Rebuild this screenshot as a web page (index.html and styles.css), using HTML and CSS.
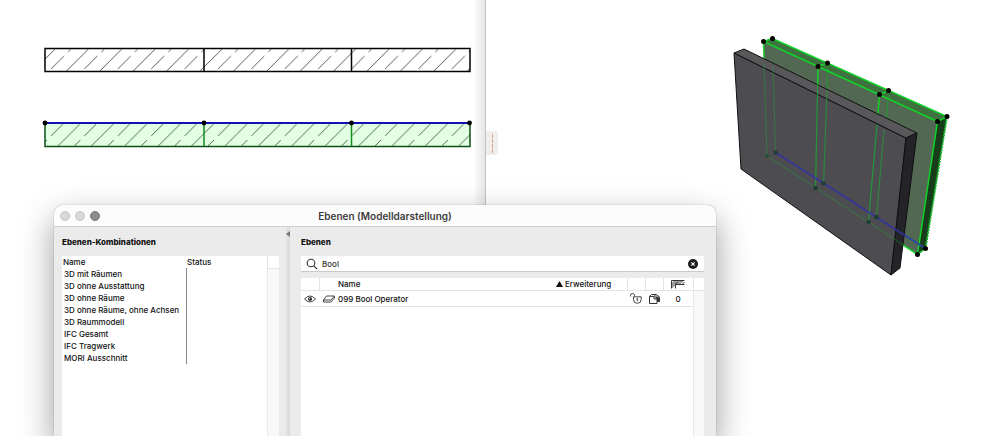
FILE: index.html
```html
<!DOCTYPE html>
<html lang="de">
<head>
    <meta charset="UTF-8">
    <meta name="viewport" content="width=device-width, initial-scale=1.0">
    <title>Ebenen (Modelldarstellung)</title>
    <link rel="stylesheet" href="styles.css">
</head>
<body>
    <main class="workspace">
        <section class="plan-view">
            <svg width="485" height="160" viewBox="0 0 485 160">
                <defs>
                    <pattern id="hatch" patternUnits="userSpaceOnUse" x="44" y="48" width="33.4" height="24">
                        <path d="M-11.4 23.5L11.1 1M22 23.5L44.5 1M7 21L20 8M24 4L27 1" stroke="#333" stroke-width="0.8" fill="none"/>
                    </pattern>
                    <pattern id="hatch-green" patternUnits="userSpaceOnUse" x="44" y="123" width="33.4" height="24">
                        <path d="M13.5 23.5L36 1M-19.9 23.5L2.6 1M7 13L19 1M-3 23L3 17M30.4 23L36.4 17" stroke="#264a26" stroke-width="0.8" fill="none"/>
                    </pattern>
                </defs>
                <rect x="45" y="48.5" width="425" height="23" fill="url(#hatch)" stroke="#000" stroke-width="1.5"/>
                <path d="M204 48V72M351.5 48V72" stroke="#000" stroke-width="1.5"/>
                <rect x="45" y="123" width="425" height="23.5" fill="#e3ffe3"/>
                <rect x="45" y="123" width="425" height="23.5" fill="url(#hatch-green)" stroke="#0b4f14" stroke-width="1.5"/>
                <path d="M204 123V146M351.5 123V146" stroke="#158a20" stroke-width="1.5"/>
                <path d="M45 123H470" stroke="#1212b4" stroke-width="2"/>
                <g fill="#000">
                    <circle cx="45" cy="123" r="2.4"/>
                    <circle cx="204" cy="123" r="2.4"/>
                    <circle cx="351.5" cy="123" r="2.4"/>
                    <circle cx="469.5" cy="123" r="2.4"/>
                </g>
            </svg>
        </section>
        <section class="model-view">
            <div class="grip"></div>
            <svg class="model" width="240" height="260" viewBox="720 25 240 260">
                <!-- green operator wall -->
                <path d="M763.5 41.5L772.5 38.5L947 116.5L925.5 248.5L917.5 254.5L767 156Z" fill="#526852"/>
                <path d="M763.5 41.5L772.5 38.5L947 116.5L937.5 121.5Z" fill="#3f703f"/>
                <path d="M937.5 121.5L947 116.5L925.5 248.5L917.5 254.5Z" fill="#173d1b"/>
                <path d="M827.5 66V100M888.5 95L885 130" stroke="#279434" stroke-width="1.2"/>
                <path d="M763.5 41.5L937.5 121.5L917.5 254.5L767 156ZM763.5 41.5L772.5 38.5L947 116.5L937.5 121.5M818 66.5L827.5 63M879.5 94.5L888.5 90.5M818 66.5L815.5 188M879.5 94.5L868.5 222M917.5 254.5L925.5 248.5" fill="none" stroke="#12d32a" stroke-width="1.5"/>
                <path d="M947 116.5L925.5 248.5" stroke="#10b824" stroke-width="2" stroke-dasharray="2 1"/>
                <path d="M775.5 152.5L925.5 248.5" stroke="#294aa0" stroke-width="2"/>

                <!-- front wall -->
                <path d="M734 53L906 138L891 275L741 169Z" fill="#4d4c51" stroke="#111" stroke-width="1"/>
                <path d="M734 53L744 49L917 133L906 138Z" fill="#58585b" stroke="#111" stroke-width="1"/>
                <path d="M906 138L917 133L900 268L891 275Z" fill="#232328" stroke="#111" stroke-width="1"/>

                <!-- edges seen through the front wall -->
                <g fill="none" stroke="#20a035" stroke-width="1.2">
                    <path d="M764 64L767 156M773 67L775.5 152.5" opacity="0.45"/>
                    <path d="M827 91L823.5 183.5M884 130L876.5 217" opacity="0.7"/>
                    <path d="M817.7 83L815.5 188M877 125L868.5 222" opacity="0.9"/>
                    <path d="M767 156L905 246" opacity="0.4"/>
                </g>
                <path d="M775.5 152.5L905 235.5" stroke="#3434a5" stroke-width="2" opacity="0.85"/>
                <g fill="#213c35">
                    <circle cx="767" cy="156" r="2.2" fill="#2c5037"/>
                    <circle cx="775.5" cy="152.5" r="2.2"/>
                    <circle cx="815.5" cy="188" r="2.3"/>
                    <circle cx="823.5" cy="183.5" r="2.3"/>
                    <circle cx="868.5" cy="222" r="2.3"/>
                    <circle cx="876.5" cy="217" r="2.3"/>
                </g>
                <g fill="#000">
                    <circle cx="763.5" cy="41.5" r="2.5"/>
                    <circle cx="772.5" cy="38.5" r="2.5"/>
                    <circle cx="818" cy="66.5" r="2.5"/>
                    <circle cx="827.5" cy="63" r="2.5"/>
                    <circle cx="879.5" cy="94.5" r="2.5"/>
                    <circle cx="888.5" cy="90.5" r="2.5"/>
                    <circle cx="937.5" cy="121.5" r="2.5"/>
                    <circle cx="947" cy="116.5" r="2.5"/>
                    <circle cx="917.5" cy="254.5" r="2.5"/>
                    <circle cx="925.5" cy="248.5" r="2.5"/>
                </g>
            </svg>
        </section>
    </main>

    <div class="dialog" role="dialog" aria-labelledby="dialog-title">
        <header class="titlebar">
            <div class="lights">
                <button class="light" aria-label="Schließen"></button>
                <button class="light" aria-label="Minimieren"></button>
                <button class="light active" aria-label="Zoomen"></button>
            </div>
            <h1 id="dialog-title">Ebenen (Modelldarstellung)</h1>
        </header>
        <div class="panes">
            <section class="pane combos">
                <h2>Ebenen-Kombinationen</h2>
                <div class="list">
                    <table class="combo-table">
                        <thead>
                            <tr><th class="combo-name">Name</th><th>Status</th><th class="scroll-head"></th></tr>
                        </thead>
                        <tbody>
                            <tr><td>3D mit Räumen</td><td></td><td></td></tr>
                            <tr><td>3D ohne Ausstattung</td><td></td><td></td></tr>
                            <tr><td>3D ohne Räume</td><td></td><td></td></tr>
                            <tr><td>3D ohne Räume, ohne Achsen</td><td></td><td></td></tr>
                            <tr><td>3D Raummodell</td><td></td><td></td></tr>
                            <tr><td>IFC Gesamt</td><td></td><td></td></tr>
                            <tr><td>IFC Tragwerk</td><td></td><td></td></tr>
                            <tr><td>MORI Ausschnitt</td><td></td><td></td></tr>
                        </tbody>
                    </table>
                </div>
            </section>
            <div class="splitter">
                <svg width="4" height="6" viewBox="0 0 4 6"><path d="M4 0V6L0 3Z" fill="#777"/></svg>
            </div>
            <section class="pane layers">
                <h2>Ebenen</h2>
                <div class="search">
                    <svg width="12" height="12" viewBox="0 0 12 12" fill="none" stroke="#333" stroke-width="1.1">
                        <circle cx="5" cy="5" r="3.8"/>
                        <path d="M7.8 7.8L11 11"/>
                    </svg>
                    <input type="text" value="Bool" aria-label="Ebenen suchen">
                    <button class="clear" aria-label="Suche löschen">
                        <svg width="10" height="10" viewBox="0 0 10 10">
                            <circle cx="5" cy="5" r="5" fill="#1b1b1b"/>
                            <path d="M3.3 3.3L6.7 6.7M6.7 3.3L3.3 6.7" stroke="#fff" stroke-width="1.1"/>
                        </svg>
                    </button>
                </div>
                <div class="list">
                    <table class="layer-table">
                        <colgroup>
                            <col class="c-eye"><col class="c-type"><col><col class="c-ext"><col class="c-icon"><col class="c-icon"><col class="c-num"><col class="c-scroll">
                        </colgroup>
                        <thead>
                            <tr>
                                <th class="sep"></th>
                                <th></th>
                                <th>Name</th>
                                <th class="sep">
                                    <span class="sorted"><svg width="7" height="6" viewBox="0 0 7 6"><path d="M3.5 0L7 6H0Z" fill="#111"/></svg>Erweiterung</span>
                                </th>
                                <th class="sep"></th>
                                <th class="sep"></th>
                                <th class="sep center">
                                    <svg width="14" height="9" viewBox="0 0 14 9" fill="none" stroke="#222" stroke-width="0.9">
                                        <path d="M0.5 8.5V0.5H13.5M4.5 8.5V4.5H13.5"/>
                                        <path d="M0.5 4L4 0.5M0.5 8L8 0.5M8 4.5L12 0.5M11 4.5L13.5 2M4.5 4L6.5 2M0.5 6L6 0.5M6 4.5L10 0.5"/>
                                    </svg>
                                </th>
                                <th></th>
                            </tr>
                        </thead>
                        <tbody>
                            <tr>
                                <td class="center">
                                    <svg width="12" height="8" viewBox="0 0 12 8">
                                        <path d="M0.5 4Q6 -2 11.5 4Q6 10 0.5 4Z" fill="none" stroke="#333" stroke-width="0.9"/>
                                        <circle cx="6" cy="4" r="2.1" fill="#333"/>
                                        <circle cx="5.5" cy="3.5" r="0.6" fill="#fff"/>
                                    </svg>
                                </td>
                                <td class="center">
                                    <svg width="12" height="8" viewBox="0 0 12 8" fill="none" stroke="#333" stroke-width="0.9">
                                        <path d="M3.5 1H11.5L8 5H0.5Z"/>
                                        <path d="M0.5 5V7H8L11.5 3V1"/>
                                    </svg>
                                </td>
                                <td>099 Bool Operator</td>
                                <td></td>
                                <td class="center">
                                    <svg width="12" height="11" viewBox="0 0 12 11" fill="none" stroke="#333" stroke-width="0.9">
                                        <path d="M0.5 3.5V2.5Q0.5 0.5 2.5 0.5T4.5 2.5V3.5"/>
                                        <path d="M3.5 3.8H11.2V6.5Q11.2 10.3 7.3 10.3T3.5 6.5Z"/>
                                        <path d="M7.3 5.5V8.3M6.5 5.8H8.1"/>
                                    </svg>
                                </td>
                                <td class="center">
                                    <svg width="11" height="10" viewBox="0 0 11 10" fill="none" stroke="#333" stroke-width="1">
                                        <path d="M5 2.5H0.5V9.5H8V7.5M0.5 2.5L2.5 0.5H7"/>
                                        <path d="M5 2.5L7 0.5L10.5 3V7.5H8V5H5Z"/>
                                        <path d="M8 5L5 2.5H8.5L10.5 4V7.5H8Z" fill="#333" stroke="none"/>
                                    </svg>
                                </td>
                                <td class="center">0</td>
                                <td class="track"></td>
                            </tr>
                        </tbody>
                    </table>
                </div>
            </section>
        </div>
    </div>
</body>
</html>
```
FILE: styles.css
```css
* {
    box-sizing: border-box;
}
body {
    margin: 0;
    background: #fff;
    font-family: Inter, "Liberation Sans", sans-serif;
    font-size: 8px;
    font-weight: 500;
    line-height: 12px;
    color: #111;
    overflow: hidden;
}
svg {
    display: block;
    flex: none;
}
h1, h2 {
    margin: 0;
    font-weight: 600;
}
button {
    border: none;
    padding: 0;
    background: none;
}

/* drawing area behind the dialog */
.workspace {
    display: grid;
    grid-template-columns: 486px 1fr;
    height: 100vh;
}
.plan-view {
    border-right: 1px solid #c4c4c4;
    background: linear-gradient(to left, #e6e6e6, #fff 12px);
}
.model-view {
    display: flex;
    justify-content: space-between;
    align-items: flex-start;
    padding: 25px 39px 0 0;
}
.grip {
    width: 12px;
    height: 24px;
    margin-top: 106px;
    border-radius: 0 3px 3px 0;
    background: #f0eeec;
    display: flex;
    justify-content: center;
    align-items: center;
}
.grip::before {
    content: "";
    width: 1px;
    height: 19px;
    background: repeating-linear-gradient(#d9a680 0 4px, transparent 4px 5px);
}

/* dialog window */
.dialog {
    position: absolute;
    top: 205px;
    left: 54px;
    right: 283px;
    bottom: 0;
    display: flex;
    flex-direction: column;
    border-radius: 9px 9px 0 0;
    background: #ebebeb;
    box-shadow: 0 0 1px rgba(0, 0, 0, 0.6), 0 14px 34px rgba(0, 0, 0, 0.4);
}
.titlebar {
    display: grid;
    grid-template-columns: 1fr auto 1fr;
    align-items: center;
    height: 22px;
    padding: 0 6px;
    border-bottom: 1px solid #cfcfcf;
    border-radius: 9px 9px 0 0;
    background: #fcfcfc;
}
.titlebar h1 {
    font-size: 10px;
    color: #3c3c3c;
}
.lights {
    display: flex;
    gap: 5px;
}
.light {
    width: 10px;
    height: 10px;
    border: 1px solid #c4c4c4;
    border-radius: 50%;
    background: #d8d8d8;
}
.light.active {
    border-color: #7a7a7a;
    background: #8c8c8c;
}
.panes {
    display: flex;
    flex: 1;
}
.pane {
    display: flex;
    flex-direction: column;
    padding-top: 9px;
}
.pane h2 {
    font-size: 8px;
    font-weight: 800;
}
.combos {
    width: 232px;
    padding-left: 8px;
    padding-right: 7px;
    gap: 8px;
}
.layers {
    flex: 1;
    padding-left: 11px;
    padding-right: 12px;
}
.splitter {
    width: 4px;
    padding-top: 4px;
    background: linear-gradient(to right, #e2e2e2, #dadada);
}
.list {
    flex: 1;
    background: #fff;
}
table {
    width: 100%;
    border-collapse: collapse;
    table-layout: fixed;
}
th, td {
    padding: 0;
    font-weight: 500;
    text-align: left;
    white-space: nowrap;
}
.combo-table th {
    height: 12px;
    padding-left: 1px;
}
.combo-table td {
    height: 12px;
    padding-left: 2px;
}
.combo-table .combo-name {
    width: 124px;
}
.combo-table td:first-child {
    border-right: 1px solid #8a8a8a;
}
.combo-table .scroll-head {
    width: 12px;
    border-left: 1px solid #e4e4e4;
    border-bottom: 1px solid #e4e4e4;
}
.combos .list {
    background: linear-gradient(to left, #f8f8f8 11px, #e9e9e9 11px 12px, #fff 12px);
}
.combos thead {
    background: #fff;
}

.search {
    display: flex;
    align-items: center;
    gap: 4px;
    height: 16px;
    margin: 8px 0 6px;
    padding: 0 6px 0 5px;
    border-bottom: 1px solid #c8c8c8;
    background: #fff;
}
.search input {
    flex: 1;
    min-width: 0;
    height: 12px;
    border: none;
    padding: 0;
    outline: none;
    background: none;
    font: inherit;
    color: #333;
}
.c-eye {
    width: 18px;
}
.c-type {
    width: 19px;
}
.c-ext {
    width: 71px;
}
.c-icon {
    width: 18px;
}
.c-num {
    width: 30px;
}
.c-scroll {
    width: 11px;
}
.layer-table th {
    height: 12px;
    border-bottom: 1px solid #e4e4e4;
}
.layer-table th.sep {
    border-right: 1px solid #e4e4e4;
}
.layer-table td {
    height: 16px;
    border-bottom: 1px solid #e4e4e4;
}
.layer-table td.track {
    border-bottom: none;
}
.layer-table .center {
    text-align: center;
}
.layer-table .center svg {
    margin: 0 auto;
}
.layers .list {
    background: linear-gradient(to left, #f8f8f8 10px, #e9e9e9 10px 11px, #fff 11px);
}
.layer-table thead {
    background: #fff;
}
.sorted {
    display: flex;
    align-items: center;
    gap: 2px;
}
```
